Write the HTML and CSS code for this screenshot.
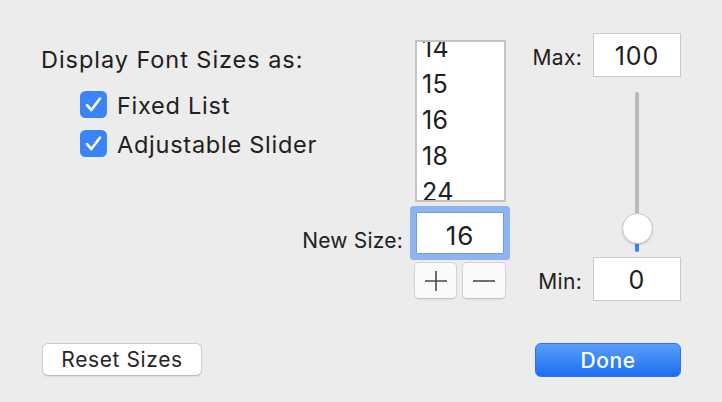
FILE: index.html
```html
<!DOCTYPE html>
<html>
<head>
<meta charset="utf-8">
<link rel="stylesheet" href="styles.css">
</head>
<body>
<div class="dialog">
  <div class="top">
    <div class="left">
      <div class="title">Display Font Sizes as:</div>
      <div class="checks">
        <label class="check">
          <svg class="box" width="27" height="27" viewBox="0 0 27 27"><rect x="0" y="0" width="27" height="27" rx="5.5" fill="#3b84f6"/><path d="M7 14.2 L11.4 19 L20 7.5" fill="none" stroke="#fff" stroke-width="2.6" stroke-linecap="round" stroke-linejoin="round"/></svg>
          <span>Fixed List</span>
        </label>
        <label class="check">
          <svg class="box" width="27" height="27" viewBox="0 0 27 27"><rect x="0" y="0" width="27" height="27" rx="5.5" fill="#3b84f6"/><path d="M7 14.2 L11.4 19 L20 7.5" fill="none" stroke="#fff" stroke-width="2.6" stroke-linecap="round" stroke-linejoin="round"/></svg>
          <span>Adjustable Slider</span>
        </label>
      </div>
      <div class="newsize">New Size:</div>
    </div>
    <div class="mid">
      <div class="list">
        <div class="items">
          <div class="item">14</div>
          <div class="item">15</div>
          <div class="item">16</div>
          <div class="item">18</div>
          <div class="item">24</div>
        </div>
      </div>
      <div class="field focus">16</div>
      <div class="steppers">
        <div class="step"><svg width="24" height="22" viewBox="0 0 24 22"><path d="M1 11 H23 M12 1 V21" stroke="#4a4a4a" stroke-width="1.6"/></svg></div>
        <div class="step"><svg width="24" height="22" viewBox="0 0 24 22"><path d="M1 11 H23" stroke="#4a4a4a" stroke-width="1.6"/></svg></div>
      </div>
    </div>
    <div class="right">
      <div class="row"><span class="lbl">Max:</span><div class="field num">100</div></div>
      <div class="slider">
        <div class="fill"></div>
        <div class="thumb"></div>
      </div>
      <div class="row minrow"><span class="lbl">Min:</span><div class="field num">0</div></div>
    </div>
  </div>
  <div class="bottom">
    <div class="btn reset">Reset Sizes</div>
    <div class="btn done">Done</div>
  </div>
</div>
</body>
</html>
```
FILE: styles.css
```css
html, body {
  margin: 0;
  padding: 0;
  background: #ececec;
}
body {
  width: 722px;
  height: 402px;
  overflow: hidden;
  font-family: Inter, "Liberation Sans", sans-serif;
  color: #202020;
}
.dialog {
  box-sizing: border-box;
  width: 722px;
  height: 402px;
  padding: 33px 41px 0 41px;
  display: flex;
  flex-direction: column;
}
.top {
  display: flex;
  height: 268px;
}
.left {
  flex: 1;
  display: flex;
  flex-direction: column;
}
.title {
  font-size: 23.5px;
  line-height: 28px;
  margin-top: 13px;
  letter-spacing: 0.95px;
}
.checks {
  display: flex;
  flex-direction: column;
  gap: 12px;
  margin-top: 17px;
  margin-left: 39px;
}
.check {
  display: flex;
  align-items: center;
  gap: 10px;
  font-size: 23.5px;
  line-height: 27px;
  letter-spacing: 0.75px;
}
.check span {
  position: relative;
  top: 1px;
}
.box {
  display: block;
  flex: none;
}
.newsize {
  margin-top: auto;
  margin-bottom: 47px;
  align-self: flex-end;
  margin-right: 6px;
  font-size: 21px;
  line-height: 26px;
  letter-spacing: 0.2px;
}
.mid {
  width: 102px;
  padding-top: 7px;
  display: flex;
  flex-direction: column;
}
.list {
  box-sizing: border-box;
  width: 91px;
  height: 162px;
  margin-left: 6px;
  border: 2px solid #c4c4c4;
  background: #fff;
  overflow: hidden;
}
.items {
  margin-top: -12px;
  padding-left: 5px;
}
.item {
  font-size: 25px;
  line-height: 36px;
  height: 36px;
  letter-spacing: 0.3px;
}
.field {
  box-sizing: border-box;
  background: #fff;
  border: 1px solid #c9c9c9;
  text-align: center;
  font-size: 25px;
  letter-spacing: 1px;
}
.field.focus {
  width: 88px;
  height: 42px;
  margin-left: 7px;
  margin-top: 10px;
  border-color: #6f9de3;
  border-radius: 1px;
  box-shadow: 0 0 0 6px #8db4ee;
  font-size: 26px;
  line-height: 37px;
  padding-top: 4px;
}
.steppers {
  display: flex;
  gap: 5px;
  margin-left: 5px;
  margin-top: 8px;
}
.step {
  box-sizing: border-box;
  width: 43px;
  height: 37px;
  background: #fafafa;
  border: 1px solid #d3d3d3;
  border-bottom-color: #c4c4c4;
  border-radius: 5px;
  box-shadow: 0 1px 1px rgba(0,0,0,0.06);
  display: flex;
  align-items: center;
  justify-content: center;
}
.step + .step {
  width: 44px;
}
.right {
  width: 170px;
  display: flex;
  flex-direction: column;
}
.row {
  display: flex;
  align-items: baseline;
  justify-content: flex-end;
  gap: 11px;
}
.lbl {
  font-size: 21px;
  letter-spacing: 0.3px;
}
.field.num {
  width: 88px;
  height: 44px;
  line-height: 39px;
  padding-top: 3px;
}
.slider {
  position: relative;
  align-self: flex-end;
  margin-right: 42px;
  margin-top: 15px;
  width: 4px;
  height: 160px;
  border-radius: 2px;
  background: #b9b9b9;
}
.fill {
  position: absolute;
  left: 0;
  bottom: 0;
  width: 4px;
  height: 18px;
  border-radius: 2px;
  background: #3a82f6;
}
.thumb {
  position: absolute;
  left: -13.5px;
  top: 121px;
  width: 31px;
  height: 31px;
  box-sizing: border-box;
  border-radius: 50%;
  background: #fff;
  border: 1px solid #c8c8c8;
  box-shadow: 0 1px 2px rgba(0,0,0,0.15);
}
.minrow {
  margin-top: 5px;
}
.bottom {
  display: flex;
  justify-content: space-between;
  margin-top: 42px;
}
.btn {
  box-sizing: border-box;
  display: flex;
  align-items: center;
  justify-content: center;
  font-size: 21px;
  letter-spacing: 0.6px;
  border-radius: 6px;
}
.reset {
  width: 160px;
  height: 33px;
  margin-left: 1px;
  background: #fff;
  border: 1px solid #cdcdcd;
  border-bottom-color: #bcbcbc;
  box-shadow: 0 1px 1px rgba(0,0,0,0.07);
  color: #262626;
}
.done {
  width: 146px;
  height: 34px;
  background: linear-gradient(#5a9ef9, #1c6ff3);
  border: 1px solid #2a73ea;
  color: #fff;
  font-weight: 500;
}
```
